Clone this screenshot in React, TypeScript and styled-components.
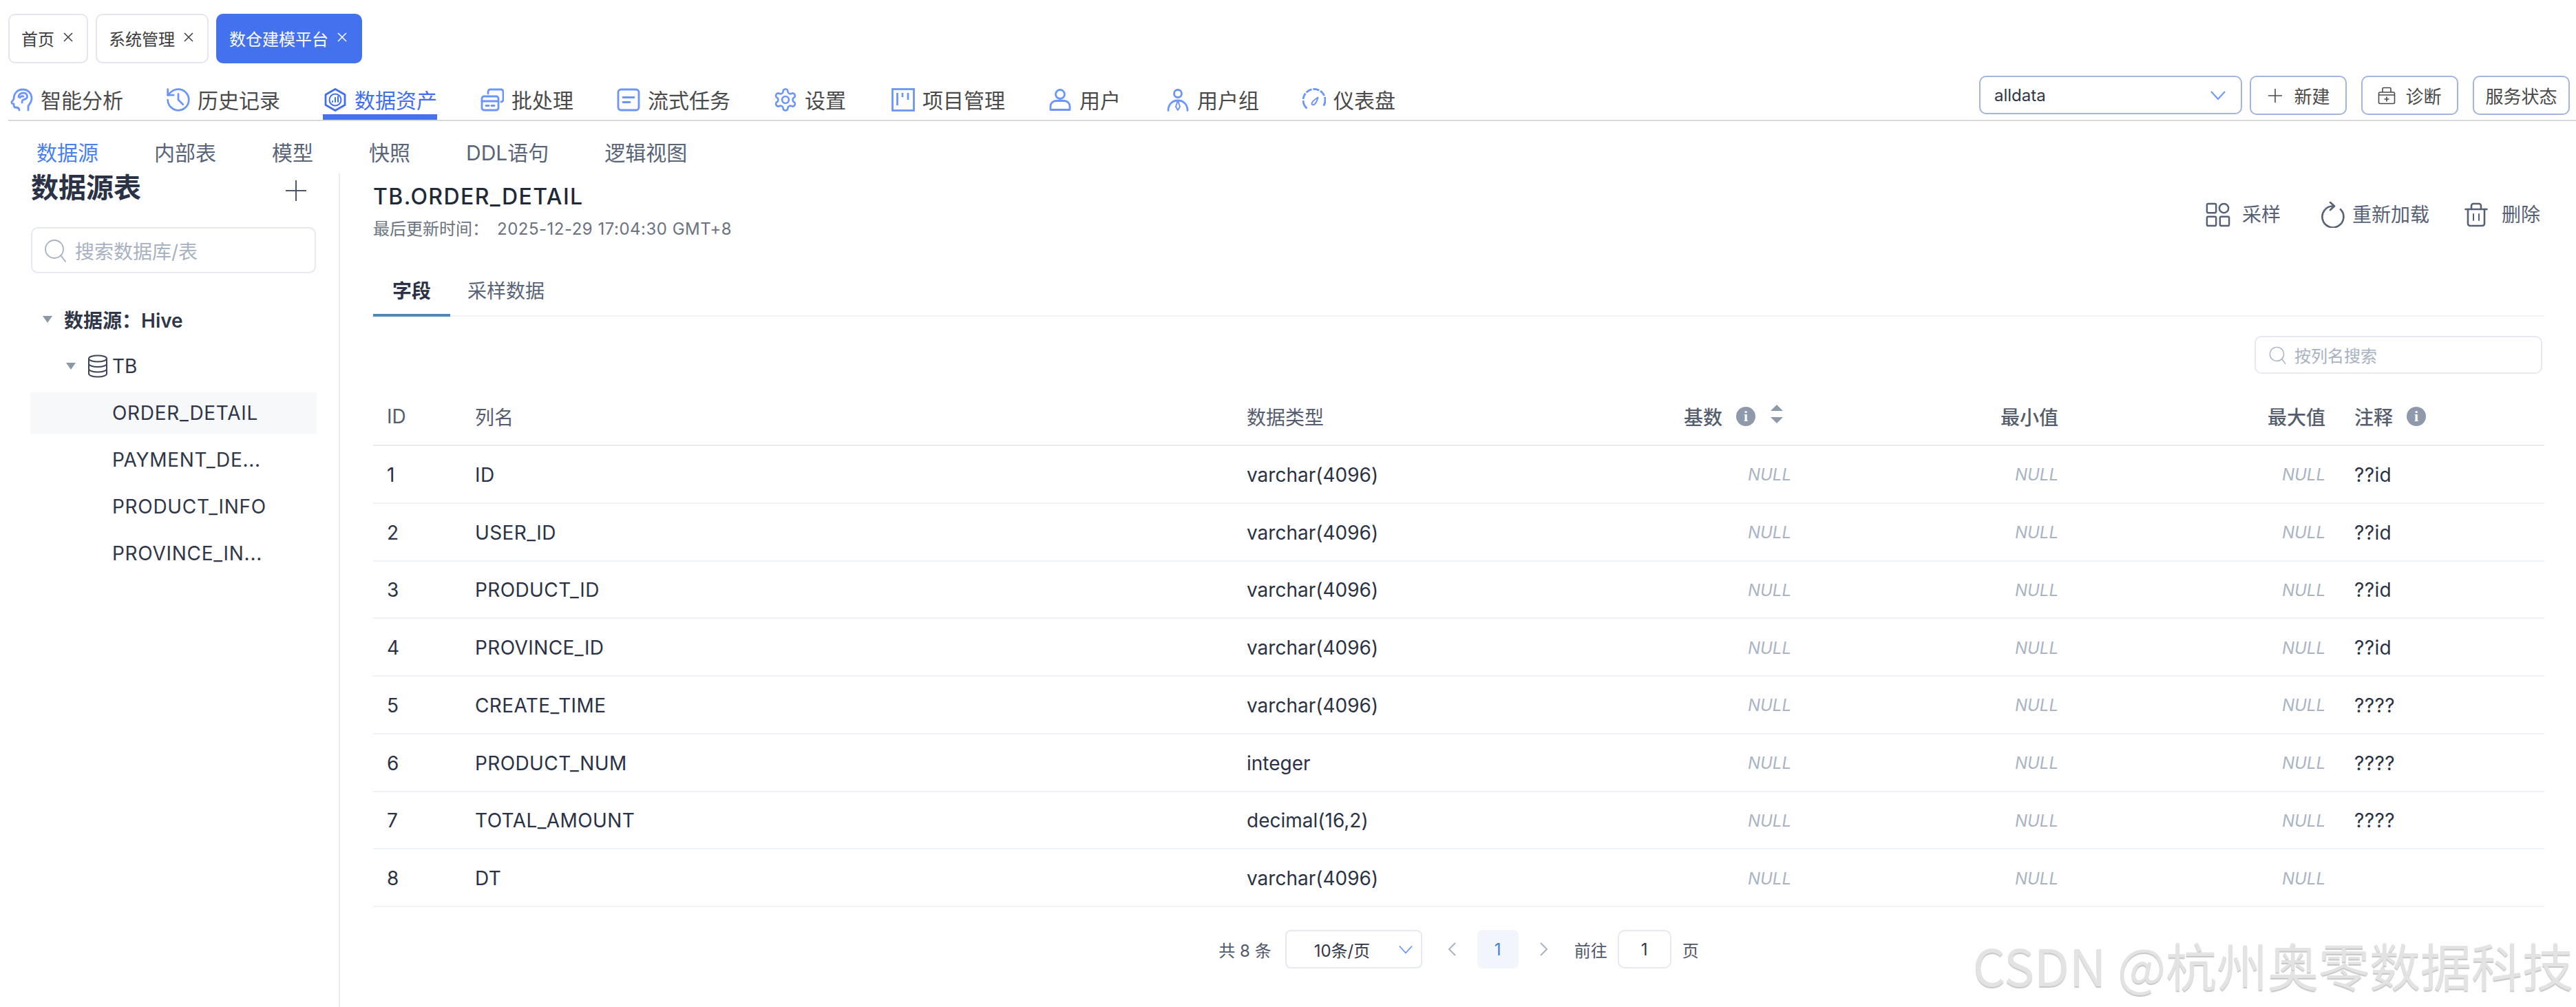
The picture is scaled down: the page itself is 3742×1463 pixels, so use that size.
import styled, { createGlobalStyle } from "styled-components";
import { ReactNode } from "react";

const GlobalStyle = createGlobalStyle`
    html, body {
        margin: 0;
        padding: 0;
        background: #fff;
    }
    body {
        font-family: Inter, "Noto Sans CJK SC", sans-serif;
        color: #2b3245;
    }
    * {
        box-sizing: border-box;
    }
`;

const Page = styled.div`
    position: relative;
    width: 3742px;
    height: 1463px;
    overflow: hidden;
    background: #fff;
`;

const TabBar = styled.div`
    display: flex;
    gap: 11px;
    padding: 20px 12px 0;
`;

const PageTab = styled.div<{ $active?: boolean }>`
    display: flex;
    align-items: center;
    gap: 12px;
    height: 72px;
    padding: 4px 19px 0 17px;
    border: 2px solid ${(props) => (props.$active ? "#4471ee" : "#e4e6ee")};
    border-radius: 10px;
    background: ${(props) => (props.$active ? "#4471ee" : "#fff")};
    color: ${(props) => (props.$active ? "#fff" : "#3d3d3d")};
    font-size: 24px;
    line-height: 32px;
`;

const CloseMark = styled.svg`
    width: 16px;
    height: 16px;
    margin-bottom: 8px;
    fill: none;
    stroke: currentColor;
    stroke-width: 1.5;
`;

const NavBar = styled.div`
    display: flex;
    justify-content: space-between;
    height: 66px;
    margin: 18px 0 0 12px;
    padding-left: 2px;
    border-bottom: 2px solid #d9d9d9;
`;

const NavList = styled.div`
    display: flex;
    gap: 63px;
`;

const NavItem = styled.div<{ $active?: boolean; $extra?: number }>`
    position: relative;
    display: flex;
    align-items: flex-start;
    gap: 11px;
    height: 64px;
    margin-right: ${(props) => props.$extra ?? 0}px;
    padding-top: 18px;
    color: ${(props) => (props.$active ? "#3f6ff0" : "#4a4a4a")};
    font-size: 30px;
    line-height: 36px;

    &::after {
        content: "";
        display: ${(props) => (props.$active ? "block" : "none")};
        position: absolute;
        left: -1px;
        right: 0;
        bottom: 0;
        height: 8px;
        background: #4471ee;
    }
`;

const NavGlyph = styled.svg<{ $active?: boolean }>`
    flex: none;
    width: 34px;
    height: 34px;
    fill: none;
    stroke: ${(props) => (props.$active ? "#3f6ff0" : "#6b95fb")};
    stroke-width: 2.8;
    stroke-linecap: round;
    stroke-linejoin: round;
`;

const Controls = styled.div`
    display: flex;
    align-items: flex-start;
    padding-right: 9px;
`;

const ProjectSelect = styled.div`
    display: flex;
    align-items: center;
    justify-content: space-between;
    width: 382px;
    height: 56px;
    margin-right: 11px;
    padding: 0 22px 0 20px;
    border: 2px solid #a3b5de;
    border-radius: 10px;
    color: #2f3648;
    font-size: 24px;
`;

const ChevronDown = styled.svg<{ $w?: number }>`
    width: ${(props) => props.$w ?? 22}px;
    height: 13px;
    fill: none;
    stroke: #6b95fb;
    stroke-width: 2;
`;

const ToolButton = styled.div`
    display: flex;
    align-items: center;
    justify-content: center;
    gap: 14px;
    width: 141px;
    height: 57px;
    margin-left: 21px;
    border: 2px solid #a3b5de;
    border-radius: 10px;
    color: #4a4a4a;
    font-size: 26px;

    ${ProjectSelect} + & {
        margin-left: 0;
    }
`;

const ToolGlyph = styled.svg`
    width: 26px;
    height: 26px;
    fill: none;
    stroke: #4a4a4a;
    stroke-width: 1.6;
`;

const SubTabs = styled.div`
    display: flex;
    align-items: center;
    gap: 81px;
    height: 76px;
    padding: 12px 0 0 53px;
`;

const SubTab = styled.div<{ $active?: boolean }>`
    color: ${(props) => (props.$active ? "#4a7ff0" : "#5a6478")};
    font-size: 30px;
`;

const Body = styled.div`
    display: flex;
    height: 1211px;
`;

const Sidebar = styled.aside`
    flex: none;
    width: 494px;
    padding: 0 32px 0 44px;
    border-right: 2px solid #e8ebf0;
`;

const SideHead = styled.div`
    display: flex;
    align-items: center;
    justify-content: space-between;
    height: 40px;
    padding: 0 15px 4px 1px;
    color: #2b3245;
    font-size: 40px;
    font-weight: 700;
`;

const PlusGlyph = styled.svg`
    width: 30px;
    height: 30px;
    margin-top: 14px;
    fill: none;
    stroke: #4d5668;
    stroke-width: 2;
`;

const SearchBox = styled.div<{ $small?: boolean }>`
    display: flex;
    align-items: center;
    gap: 10px;
    width: ${(props) => (props.$small ? 418 : 414)}px;
    height: ${(props) => (props.$small ? 55 : 67)}px;
    margin-left: ${(props) => (props.$small ? 0 : 1)}px;
    padding-left: ${(props) => (props.$small ? 18 : 16)}px;
    border: 2px solid #e6e9f2;
    border-radius: 10px;
    color: #a8b2c2;
    font-size: ${(props) => (props.$small ? 24 : 28)}px;
`;

const SideSearch = styled.div`
    margin-top: 38px;
`;

const SearchGlyph = styled.svg<{ $small?: boolean }>`
    flex: none;
    width: ${(props) => (props.$small ? 28 : 36)}px;
    height: ${(props) => (props.$small ? 28 : 36)}px;
    fill: none;
    stroke: #a8b2c2;
    stroke-width: 1.8;
    stroke-linecap: round;
`;

const Tree = styled.div`
    display: flex;
    flex-direction: column;
    gap: 8px;
    margin-top: 37px;
`;

const TreeRow = styled.div<{ $indent: number; $selected?: boolean; $bold?: boolean; $leaf?: boolean }>`
    display: flex;
    align-items: center;
    height: 60px;
    padding-left: ${(props) => props.$indent}px;
    background: ${(props) => (props.$selected ? "#f7f8fa" : "transparent")};
    color: #2f3648;
    font-size: 28px;
    font-weight: ${(props) => (props.$bold ? 600 : 400)};
    letter-spacing: ${(props) => (props.$leaf ? "0.7px" : "0")};
`;

const Caret = styled.span`
    flex: none;
    width: 0;
    height: 0;
    margin-right: 17px;
    border-left: 7px solid transparent;
    border-right: 7px solid transparent;
    border-top: 10px solid #8c97a8;
`;

const DbGlyph = styled.svg`
    flex: none;
    width: 30px;
    height: 34px;
    margin-right: 6px;
    fill: none;
    stroke: #3c4456;
    stroke-width: 2;
`;

const Main = styled.main`
    flex: 1;
    min-width: 0;
    padding: 0 46px 0 48px;
`;

const DetailHead = styled.div`
    display: flex;
    justify-content: space-between;
    align-items: flex-start;
    margin-top: 14px;
`;

const TableName = styled.h2`
    margin: 0;
    color: #1f2937;
    font-size: 32px;
    font-weight: 500;
    letter-spacing: 1.4px;
    line-height: 40px;
`;

const UpdatedAt = styled.div`
    display: flex;
    gap: 12px;
    margin-top: 11px;
    color: #6b7280;
    font-size: 24px;
    line-height: 32px;
`;

const UpdatedValue = styled.span`
    letter-spacing: 0.5px;
`;

const Actions = styled.div`
    display: flex;
    align-items: center;
    margin-top: 27px;
    padding-right: 6px;
`;

const Action = styled.div<{ $gap: number; $space?: number }>`
    display: flex;
    align-items: center;
    gap: ${(props) => props.$gap}px;
    margin-right: ${(props) => props.$space ?? 0}px;
    color: #566176;
    font-size: 28px;
    line-height: 38px;
`;

const ActionGlyph = styled.svg<{ $w: number }>`
    flex: none;
    width: ${(props) => props.$w}px;
    height: 38px;
    fill: none;
    stroke: #566176;
    stroke-width: 2.6;
    stroke-linecap: round;
    stroke-linejoin: round;
`;

const DetailTabs = styled.div`
    display: flex;
    height: 74px;
    margin-top: 37px;
    border-bottom: 2px solid #eef1f6;
`;

const DetailTab = styled.div<{ $active?: boolean }>`
    position: relative;
    padding: 2px ${(props) => (props.$active ? 28 : 25)}px 0;
    color: ${(props) => (props.$active ? "#2b3245" : "#5a6478")};
    font-size: 28px;
    font-weight: ${(props) => (props.$active ? 600 : 400)};
    line-height: 70px;

    &::after {
        content: "";
        display: ${(props) => (props.$active ? "block" : "none")};
        position: absolute;
        left: 0;
        right: 0;
        bottom: -2px;
        height: 4px;
        background: #5089b8;
    }
`;

const SearchRow = styled.div`
    display: flex;
    justify-content: flex-end;
    margin-top: 28px;
    padding-right: 3px;
`;

const columns = "128px 1121px 443px 388px 388px 388px 298px";

const HeadRow = styled.div`
    display: grid;
    grid-template-columns: ${columns};
    align-items: center;
    height: 84px;
    margin-top: 21px;
    border-bottom: 2px solid #e8ebf2;
    color: #555d6e;
    font-size: 28px;
`;

const Row = styled.div`
    display: grid;
    grid-template-columns: ${columns};
    align-items: center;
    height: 83.75px;
    padding-top: 2px;
    border-bottom: 2px solid #eef1f6;
    color: #2b3245;
    font-size: 28px;
`;

const Cell = styled.div<{ $right?: boolean; $strong?: boolean }>`
    display: flex;
    align-items: center;
    justify-content: ${(props) => (props.$right ? "flex-end" : "flex-start")};
    padding: 0 20px;
    font-weight: ${(props) => (props.$strong ? 500 : 400)};
`;

const NoteCell = styled(Cell)`
    padding-left: 22px;
`;

const ColumnName = styled.span`
    letter-spacing: 0.4px;
`;

const NullText = styled.span`
    color: #a9b3c4;
    font-size: 24px;
    font-style: italic;
`;

const InfoDot = styled.span`
    display: inline-flex;
    align-items: center;
    justify-content: center;
    width: 28px;
    height: 28px;
    margin-left: 20px;
    border-radius: 50%;
    background: #8e99ab;
    color: #fff;
    font-family: "Liberation Serif", serif;
    font-size: 22px;
    font-weight: 700;
`;

const SortMark = styled.span`
    display: inline-flex;
    flex-direction: column;
    gap: 9px;
    margin: -8px 12px 0 22px;
`;

const SortArrow = styled.span<{ $up?: boolean }>`
    width: 0;
    height: 0;
    border-left: 9px solid transparent;
    border-right: 9px solid transparent;
    ${(props) =>
        props.$up ? "border-bottom: 9px solid #8e99ab;" : "border-top: 9px solid #8e99ab;"}
`;

const Pager = styled.div`
    display: flex;
    align-items: center;
    justify-content: center;
    height: 56px;
    margin-top: 33px;
    color: #4f586a;
    font-size: 24px;
`;

const PagerText = styled.span`
    white-space: pre;
`;

const SizeSelect = styled.div`
    display: flex;
    align-items: center;
    gap: 42px;
    width: 199px;
    height: 56px;
    margin: 0 36px 0 20px;
    padding-left: 40px;
    border: 2px solid #e6e9f2;
    border-radius: 8px;
    color: #2f3648;
`;

const PageArrow = styled.svg<{ $flip?: boolean }>`
    width: 14px;
    height: 24px;
    fill: none;
    stroke: #a8b2c2;
    stroke-width: 2;
    transform: ${(props) => (props.$flip ? "scaleX(-1)" : "none")};
`;

const PageNumber = styled.div`
    display: flex;
    align-items: center;
    justify-content: center;
    width: 60px;
    height: 56px;
    margin: 0 30px;
    border-radius: 8px;
    background: #f2f6fc;
    color: #3b82d6;
`;

const JumpLabel = styled.span`
    margin-left: 37px;
`;

const JumpInput = styled.div`
    display: flex;
    align-items: center;
    justify-content: center;
    width: 78px;
    height: 56px;
    margin: 0 16px 0 15px;
    border: 2px solid #e6e9f2;
    border-radius: 10px;
    color: #2f3648;
`;

const Watermark = styled.div`
    position: absolute;
    right: 4px;
    bottom: 20px;
    color: #e3e3e3;
    font-family: "Noto Sans CJK SC", sans-serif;
    font-size: 74px;
    line-height: 84px;
    text-shadow: 0 2px 1px #c6c6c6;
    white-space: nowrap;
`;

const settingsPath =
    "M12.22 2h-.44a2 2 0 0 0-2 2v.18a2 2 0 0 1-1 1.73l-.43.25a2 2 0 0 1-2 0l-.15-.08a2 2 0 0 0-2.73.73l-.22.38a2 2 0 0 0 .73 2.73l.15.1a2 2 0 0 1 1 1.72v.51a2 2 0 0 1-1 1.74l-.15.09a2 2 0 0 0-.73 2.73l.22.38a2 2 0 0 0 2.73.73l.15-.08a2 2 0 0 1 2 0l.43.25a2 2 0 0 1 1 1.73V20a2 2 0 0 0 2 2h.44a2 2 0 0 0 2-2v-.18a2 2 0 0 1 1-1.73l.43-.25a2 2 0 0 1 2 0l.15.08a2 2 0 0 0 2.73-.73l.22-.39a2 2 0 0 0-.73-2.73l-.15-.08a2 2 0 0 1-1-1.74v-.5a2 2 0 0 1 1-1.74l.15-.09a2 2 0 0 0 .73-2.73l-.22-.38a2 2 0 0 0-2.73-.73l-.15.08a2 2 0 0 1-2 0l-.43-.25a2 2 0 0 1-1-1.73V4a2 2 0 0 0-2-2z";

type NavEntry = { label: string; box?: string; active?: boolean; extra?: number; draw: ReactNode };

const navItems: NavEntry[] = [
    {
        label: "智能分析",
        draw: (
            <>
                <path d="M14 32c0-3-3-4-6-4-2 0-2-3-2-5-2 0-4-1-3-3l3-4C6 7 12 2 19 2c7.500 0 13 5.500 13 13 0 5-3 8-5 11v6" />
                <path d="M13 13c0-4 3-6 7-6 4 0 6 3 5.500 6-.5 3-4 3-6 4-1 .5-1.500 2-1.500 4" />
                <path d="M15 14c1-2 3-3 5-2" />
            </>
        ),
    },
    {
        label: "历史记录",
        box: "2 2 20 20",
        draw: (
            <>
                <path d="M3 12a9 9 0 1 0 9-9 9.750 9.750 0 0 0-6.740 2.740L3 8" strokeWidth={1.600} />
                <path d="M3 3v5h5" strokeWidth={1.600} />
                <path d="M12 7v5l4 4" strokeWidth={1.600} />
            </>
        ),
    },
    {
        label: "数据资产",
        active: true,
        draw: (
            <>
                <path d="M17 1.500 31 9.500v15l-14 8-14-8v-15z" />
                <circle cx="17" cy="17" r="8.500" strokeWidth={2} />
                <path d="M13 20v-1M17 20v-6M21 20v-8" strokeWidth={2} />
            </>
        ),
    },
    {
        label: "批处理",
        draw: (
            <>
                <rect x="2" y="12" width="24" height="20" rx="3" />
                <path d="M2 19h24" />
                <path d="M8 25.500h4M16 25.500h4" />
                <path d="M11 8V5a3 3 0 0 1 3-3h16a3 3 0 0 1 3 3v12a3 3 0 0 1-3 3" />
            </>
        ),
    },
    {
        label: "流式任务",
        draw: (
            <>
                <rect x="2" y="2" width="30" height="30" rx="4" />
                <path d="M9 13.500h16M9 20.500h10" />
            </>
        ),
    },
    {
        label: "设置",
        box: "1 1 22 22",
        extra: 3,
        draw: (
            <>
                <path d={settingsPath} strokeWidth={1.700} />
                <circle cx="12" cy="12" r="3.200" strokeWidth={1.700} />
            </>
        ),
    },
    {
        label: "项目管理",
        draw: (
            <g strokeLinecap="butt" strokeLinejoin="miter">
                <rect x="1.500" y="1.500" width="31" height="31" />
                <path d="M8.500 7v18M16 7v6M24 7v10" />
            </g>
        ),
    },
    {
        label: "用户",
        extra: 3,
        draw: (
            <>
                <circle cx="17" cy="9" r="6.500" />
                <path d="M3 31.500v-5a8 8 0 0 1 8-8h12a8 8 0 0 1 8 8v5z" />
            </>
        ),
    },
    {
        label: "用户组",
        draw: (
            <>
                <circle cx="17" cy="8" r="5.500" />
                <path d="M3 32.500c0-9 6-14.500 14-14.500s14 5.500 14 14.500" />
                <path d="M17 18l-3 9 3 5 3-5z" strokeWidth={2} />
            </>
        ),
    },
    {
        label: "仪表盘",
        draw: (
            <>
                <path
                    d="M6.500 29.500A16 16 0 1 1 27.500 29.500"
                    strokeLinecap="butt"
                    strokeDasharray="13 2 9 2 9 2 9 2 9 2 13"
                />
                <path d="M13.500 22.500c.5-3 5-6.500 9-9-1 4-2.500 8.500-5.500 10.500-2 1-4-.5-3.500-1.500z" strokeWidth={2} />
            </>
        ),
    },
];

const subTabs = ["数据源", "内部表", "模型", "快照", "DDL语句", "逻辑视图"];

const fields = [
    { name: "ID", type: "varchar(4096)", note: "??id" },
    { name: "USER_ID", type: "varchar(4096)", note: "??id" },
    { name: "PRODUCT_ID", type: "varchar(4096)", note: "??id" },
    { name: "PROVINCE_ID", type: "varchar(4096)", note: "??id" },
    { name: "CREATE_TIME", type: "varchar(4096)", note: "????" },
    { name: "PRODUCT_NUM", type: "integer", note: "????" },
    { name: "TOTAL_AMOUNT", type: "decimal(16,2)", note: "????" },
    { name: "DT", type: "varchar(4096)", note: "" },
];

function Search({ small }: { small?: boolean }) {
    return (
        <SearchGlyph $small={small} viewBox="0 0 36 36">
            <circle cx="16" cy="16" r="13" />
            <path d="M26 26l6 8" />
        </SearchGlyph>
    );
}

function App() {
    return (
        <Page>
            <GlobalStyle />
            <TabBar>
                {["首页", "系统管理", "数仓建模平台"].map((name, i) => (
                    <PageTab key={name} $active={i === 2}>
                        {name}
                        <CloseMark viewBox="0 0 16 16">
                            <path d="M2 2l12 12M14 2L2 14" />
                        </CloseMark>
                    </PageTab>
                ))}
            </TabBar>

            <NavBar>
                <NavList>
                    {navItems.map((item) => (
                        <NavItem key={item.label} $active={item.active} $extra={item.extra}>
                            <NavGlyph $active={item.active} viewBox={item.box ?? "0 0 34 34"}>
                                {item.draw}
                            </NavGlyph>
                            {item.label}
                        </NavItem>
                    ))}
                </NavList>
                <Controls>
                    <ProjectSelect>
                        alldata
                        <ChevronDown viewBox="0 0 22 13">
                            <path d="M1 1l10 11L21 1" />
                        </ChevronDown>
                    </ProjectSelect>
                    <ToolButton>
                        <ToolGlyph viewBox="0 0 26 26">
                            <path d="M13 3v20M3 13h20" />
                        </ToolGlyph>
                        新建
                    </ToolButton>
                    <ToolButton>
                        <ToolGlyph viewBox="0 0 26 26">
                            <rect x="1.500" y="8" width="23" height="16.500" rx="2" />
                            <path d="M7 8V3a1.500 1.500 0 0 1 1.500-1.500h9A1.500 1.500 0 0 1 19 3v5M2 12h22M13 14.500v7M9.500 18h7" />
                        </ToolGlyph>
                        诊断
                    </ToolButton>
                    <ToolButton>服务状态</ToolButton>
                </Controls>
            </NavBar>

            <SubTabs>
                {subTabs.map((name, i) => (
                    <SubTab key={name} $active={i === 0}>
                        {name}
                    </SubTab>
                ))}
            </SubTabs>

            <Body>
                <Sidebar>
                    <SideHead>
                        数据源表
                        <PlusGlyph viewBox="0 0 30 30">
                            <path d="M15 0v30M0 15h30" />
                        </PlusGlyph>
                    </SideHead>
                    <SideSearch>
                        <SearchBox>
                            <Search />
                            搜索数据库/表
                        </SearchBox>
                    </SideSearch>
                    <Tree>
                        <TreeRow $indent={18} $bold>
                            <Caret />
                            数据源：Hive
                        </TreeRow>
                        <TreeRow $indent={52}>
                            <Caret />
                            <DbGlyph viewBox="0 0 30 34">
                                <ellipse cx="15" cy="6" rx="13" ry="4.500" />
                                <path d="M2 6v22c0 2.500 6 4.500 13 4.500s13-2 13-4.500V6" />
                                <path d="M2 13.500c0 2.500 6 4.500 13 4.500s13-2 13-4.500M2 21c0 2.500 6 4.500 13 4.500s13-2 13-4.500" />
                            </DbGlyph>
                            TB
                        </TreeRow>
                        <TreeRow $indent={119} $selected $leaf>
                            ORDER_DETAIL
                        </TreeRow>
                        <TreeRow $indent={119} $leaf>
                            PAYMENT_DE...
                        </TreeRow>
                        <TreeRow $indent={119} $leaf>
                            PRODUCT_INFO
                        </TreeRow>
                        <TreeRow $indent={119} $leaf>
                            PROVINCE_IN...
                        </TreeRow>
                    </Tree>
                </Sidebar>

                <Main>
                    <DetailHead>
                        <div>
                            <TableName>TB.ORDER_DETAIL</TableName>
                            <UpdatedAt>
                                <span>最后更新时间：</span>
                                <UpdatedValue>2025-12-29 17:04:30 GMT+8</UpdatedValue>
                            </UpdatedAt>
                        </div>
                        <Actions>
                            <Action $gap={17} $space={59}>
                                <ActionGlyph $w={36} viewBox="0 0 38 38">
                                    <rect x="2" y="2" width="14" height="14" rx="2" />
                                    <circle cx="28" cy="9" r="7" />
                                    <rect x="2" y="22" width="14" height="14" rx="2" />
                                    <rect x="22" y="22" width="14" height="14" rx="2" />
                                </ActionGlyph>
                                采样
                            </Action>
                            <Action $gap={11} $space={51}>
                                <ActionGlyph $w={34} viewBox="0 0 34 38">
                                    <path d="M27.900 11.100A15.500 15.500 0 1 1 17 6.500" />
                                    <path d="M13 1l6 5.500-6 5.500" />
                                </ActionGlyph>
                                重新加载
                            </Action>
                            <Action $gap={20}>
                                <ActionGlyph $w={34} viewBox="0 0 34 38">
                                    <path d="M1.500 11h31" />
                                    <path d="M10 11V6a3 3 0 0 1 3-3h8a3 3 0 0 1 3 3v5" />
                                    <path d="M5 11v21a3 3 0 0 0 3 3h18a3 3 0 0 0 3-3V11" />
                                    <path d="M13 18v9M21 18v9" strokeWidth={2} />
                                </ActionGlyph>
                                删除
                            </Action>
                        </Actions>
                    </DetailHead>

                    <DetailTabs>
                        <DetailTab $active>字段</DetailTab>
                        <DetailTab>采样数据</DetailTab>
                    </DetailTabs>

                    <SearchRow>
                        <SearchBox $small>
                            <Search small />
                            按列名搜索
                        </SearchBox>
                    </SearchRow>

                    <HeadRow>
                        <Cell>ID</Cell>
                        <Cell>列名</Cell>
                        <Cell>数据类型</Cell>
                        <Cell $right $strong>
                            基数
                            <InfoDot>i</InfoDot>
                            <SortMark>
                                <SortArrow $up />
                                <SortArrow />
                            </SortMark>
                        </Cell>
                        <Cell $right $strong>
                            最小值
                        </Cell>
                        <Cell $right $strong>
                            最大值
                        </Cell>
                        <NoteCell $strong>
                            注释
                            <InfoDot>i</InfoDot>
                        </NoteCell>
                    </HeadRow>

                    {fields.map((field, i) => (
                        <Row key={field.name}>
                            <Cell>{i + 1}</Cell>
                            <Cell>
                                <ColumnName>{field.name}</ColumnName>
                            </Cell>
                            <Cell>{field.type}</Cell>
                            <Cell $right>
                                <NullText>NULL</NullText>
                            </Cell>
                            <Cell $right>
                                <NullText>NULL</NullText>
                            </Cell>
                            <Cell $right>
                                <NullText>NULL</NullText>
                            </Cell>
                            <NoteCell>
                                <ColumnName>{field.note}</ColumnName>
                            </NoteCell>
                        </Row>
                    ))}

                    <Pager>
                        <PagerText>共 8 条</PagerText>
                        <SizeSelect>
                            10条/页
                            <ChevronDown $w={20} viewBox="0 0 22 13">
                                <path d="M1 1l10 11L21 1" />
                            </ChevronDown>
                        </SizeSelect>
                        <PageArrow viewBox="0 0 14 24">
                            <path d="M12 3L3 12l9 9" />
                        </PageArrow>
                        <PageNumber>1</PageNumber>
                        <PageArrow $flip viewBox="0 0 14 24">
                            <path d="M12 3L3 12l9 9" />
                        </PageArrow>
                        <JumpLabel>前往</JumpLabel>
                        <JumpInput>1</JumpInput>
                        <PagerText>页</PagerText>
                    </Pager>
                </Main>
            </Body>

            <Watermark>CSDN @杭州奥零数据科技</Watermark>
        </Page>
    );
}

export default App;
